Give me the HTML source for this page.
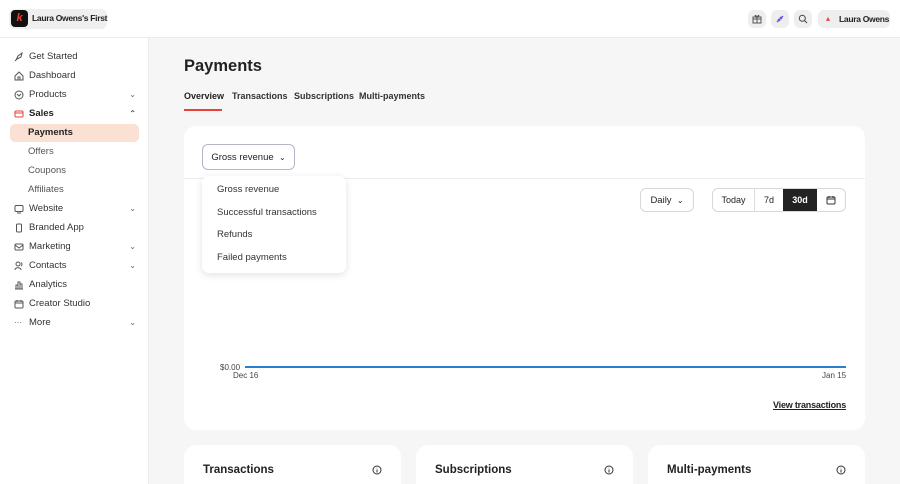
<!DOCTYPE html>
<html style="width:900px;height:484px;overflow:hidden"><head><meta charset="utf-8"><style>
*{box-sizing:border-box;margin:0;padding:0}
body{width:900px;height:484px;overflow:hidden;background:#f6f6f6;font-family:"Liberation Sans",sans-serif;color:#222;position:relative;font-size:10px}
.abs{position:absolute}
.top{left:0;top:0;width:900px;height:38px;background:#fff;border-bottom:1px solid #ececec}
.side{left:0;top:38px;width:149px;height:446px;background:#fff;border-right:1px solid #ececec}
.nav{position:absolute;left:14px;height:19px;line-height:19px;font-size:9.5px;color:#333;display:flex;align-items:center;width:124px}
.nav svg{width:10px;height:10px;margin-right:5px;flex:none}
.nav .ch{position:absolute;right:2px;font-size:8px;color:#666}
.sub{position:absolute;left:28px;font-size:9.5px;color:#555;line-height:19px}
.card{background:#fff;border-radius:12px}
.btn{border:1px solid #d8d8d8;border-radius:6px;background:#fff;display:flex;align-items:center;justify-content:center;font-size:9.5px}
.ib{width:18px;height:18px;border-radius:6px;background:#eee;display:flex;align-items:center;justify-content:center}
.tab{position:absolute;top:91px;font-size:9px;font-weight:bold;color:#333}
</style></head><body>
<div class="abs top"></div>
<div class="abs" style="left:9px;top:9px;width:98px;height:20px;background:#efefef;border-radius:6px"></div>
<div class="abs" style="left:11px;top:10px;width:17px;height:17px;background:#111;border-radius:4px;color:#e8423a;font-weight:bold;font-size:11px;text-align:center;line-height:17px;font-style:italic">k</div>
<div class="abs" style="left:32px;top:13px;font-size:8.5px;font-weight:bold;letter-spacing:-.3px">Laura Owens's First</div>
<div class="abs ib" style="left:748px;top:10px"><svg width="10" height="10" viewBox="0 0 10 10" fill="none" stroke="#555" stroke-width="1"><rect x="1" y="3" width="8" height="6"/><path d="M5 3v6M1 5h8M5 3C3 0 2 2 5 3C8 2 7 0 5 3"/></svg></div>
<div class="abs ib" style="left:771px;top:10px"><svg width="10" height="10" viewBox="0 0 10 10" stroke="#6b4de6" stroke-width="1.4"><path d="M2 8L8 2M3 5l2 2M5 3l2 2"/></svg></div>
<div class="abs ib" style="left:794px;top:10px"><svg width="10" height="10" viewBox="0 0 10 10" fill="none" stroke="#444" stroke-width="1"><circle cx="4.3" cy="4.3" r="3"/><path d="M6.5 6.5L9 9"/></svg></div>
<div class="abs" style="left:818px;top:10px;width:72px;height:18px;background:#eee;border-radius:6px"></div>
<div class="abs" style="left:824px;top:14px;width:8px;height:10px;color:#e8423a;font-size:8px;text-align:center">▴</div>
<div class="abs" style="left:839px;top:14px;font-size:8.5px;font-weight:bold;letter-spacing:-.3px">Laura Owens</div>

<div class="abs side"></div>
<div class="nav" style="top:47px"><svg viewBox="0 0 10 10" fill="none" stroke="#555"><path d="M2 8l2-4 4-3-1 4-4 2zM1 9l2-2"/></svg>Get Started</div>
<div class="nav" style="top:66px"><svg viewBox="0 0 10 10" fill="none" stroke="#555"><path d="M1 5l4-4 4 4v4H1z"/><rect x="4" y="6" width="2" height="3"/></svg>Dashboard</div>
<div class="nav" style="top:85px"><svg viewBox="0 0 10 10" fill="none" stroke="#555"><circle cx="5" cy="5" r="4"/><path d="M3 4l2 2 2-2"/></svg>Products<span class="ch">⌄</span></div>
<div class="nav" style="top:104px;font-weight:bold;color:#222"><svg viewBox="0 0 10 10" fill="none" stroke="#e8423a"><rect x="1" y="2" width="8" height="6" rx="1"/><path d="M1 4h8"/></svg>Sales<span class="ch">⌃</span></div>
<div class="abs" style="left:10px;top:124px;width:129px;height:18px;background:#fbe1d3;border-radius:5px"></div>
<div class="sub" style="top:123px;color:#222;font-weight:bold">Payments</div>
<div class="sub" style="top:142px">Offers</div>
<div class="sub" style="top:161px">Coupons</div>
<div class="sub" style="top:180px">Affiliates</div>
<div class="nav" style="top:199px"><svg viewBox="0 0 10 10" fill="none" stroke="#555"><rect x="1" y="1.5" width="8" height="6" rx="1"/><path d="M3 9h4"/></svg>Website<span class="ch">⌄</span></div>
<div class="nav" style="top:218px"><svg viewBox="0 0 10 10" fill="none" stroke="#555"><rect x="2.5" y="1" width="5" height="8" rx="1"/></svg>Branded App</div>
<div class="nav" style="top:237px"><svg viewBox="0 0 10 10" fill="none" stroke="#555"><rect x="1" y="2" width="8" height="6" rx="1"/><path d="M1 3l4 3 4-3"/></svg>Marketing<span class="ch">⌄</span></div>
<div class="nav" style="top:256px"><svg viewBox="0 0 10 10" fill="none" stroke="#555"><circle cx="4" cy="3" r="2"/><path d="M1 9c0-3 6-3 6 0M7 1.5a2 2 0 010 3.5"/></svg>Contacts<span class="ch">⌄</span></div>
<div class="nav" style="top:275px"><svg viewBox="0 0 10 10" fill="none" stroke="#555"><path d="M1 9h8M2 9V5h2v4M4 9V2h2v7M6 9V4h2v5"/></svg>Analytics</div>
<div class="nav" style="top:294px"><svg viewBox="0 0 10 10" fill="none" stroke="#555"><rect x="1" y="2" width="8" height="7" rx="1"/><path d="M1 4h8M3 1v2M7 1v2"/></svg>Creator Studio</div>
<div class="nav" style="top:313px"><span style="width:10px;margin-right:5px;font-size:8px;color:#555">···</span>More<span class="ch">⌄</span></div>

<div class="abs" style="left:184px;top:57px;font-size:16.5px;font-weight:bold">Payments</div>
<div class="tab" style="left:184px;color:#222">Overview</div>
<div class="abs" style="left:184px;top:109px;width:38px;height:2px;background:#e8423a"></div>
<div class="tab" style="left:232px">Transactions</div>
<div class="tab" style="left:294px">Subscriptions</div>
<div class="tab" style="left:359px">Multi-payments</div>

<div class="abs card" style="left:184px;top:126px;width:681px;height:304px"></div>
<div class="abs" style="left:184px;top:178px;width:681px;height:1px;background:#ececec"></div>
<div class="abs btn" style="left:202px;top:144px;width:93px;height:26px;border-color:#b8b4c8">Gross revenue&nbsp;&nbsp;<span style="font-size:8px">⌄</span></div>
<div class="abs" style="left:202px;top:176px;width:144px;height:97px;background:#fff;border-radius:7px;box-shadow:0 2px 8px rgba(0,0,0,.12)"></div>
<div class="abs" style="left:217px;top:184px;font-size:9.5px;color:#333">Gross revenue</div>
<div class="abs" style="left:217px;top:207px;font-size:9.5px;color:#333">Successful transactions</div>
<div class="abs" style="left:217px;top:229px;font-size:9.5px;color:#333">Refunds</div>
<div class="abs" style="left:217px;top:252px;font-size:9.5px;color:#333">Failed payments</div>
<div class="abs btn" style="left:640px;top:188px;width:54px;height:24px">Daily&nbsp;&nbsp;<span style="font-size:8px">⌄</span></div>
<div class="abs" style="left:712px;top:188px;width:134px;height:24px;border:1px solid #d8d8d8;border-radius:6px;overflow:hidden;display:flex;font-size:9px">
<div style="width:42px;border-right:1px solid #ddd;text-align:center;line-height:22px">Today</div>
<div style="width:28px;text-align:center;line-height:22px">7d</div>
<div style="width:34px;background:#222;color:#fff;text-align:center;line-height:22px;font-weight:bold">30d</div>
<div style="flex:1;display:flex;align-items:center;justify-content:center"><svg width="10" height="10" viewBox="0 0 10 10" fill="none" stroke="#333"><rect x="1" y="2" width="8" height="7" rx="1"/><path d="M1 4h8M3 1v2M7 1v2"/></svg></div></div>
<div class="abs" style="left:220px;top:363px;font-size:8px;color:#444">$0.00</div>
<div class="abs" style="left:245px;top:366px;width:601px;height:2px;background:#2a7fd0"></div>
<div class="abs" style="left:233px;top:371px;font-size:8px;color:#444">Dec 16</div>
<div class="abs" style="left:822px;top:371px;font-size:8px;color:#444">Jan 15</div>
<div class="abs" style="right:54px;top:400px;font-size:9px;font-weight:bold;text-decoration:underline;letter-spacing:-.2px">View transactions</div>

<div class="abs card" style="left:184px;top:445px;width:217px;height:39px;border-radius:12px 12px 0 0"></div>
<div class="abs card" style="left:416px;top:445px;width:217px;height:39px;border-radius:12px 12px 0 0"></div>
<div class="abs card" style="left:648px;top:445px;width:217px;height:39px;border-radius:12px 12px 0 0"></div>
<div class="abs" style="left:203px;top:464px;font-size:11.5px;font-weight:bold">Transactions</div>
<div class="abs" style="left:435px;top:464px;font-size:11.5px;font-weight:bold">Subscriptions</div>
<div class="abs" style="left:667px;top:464px;font-size:11.5px;font-weight:bold">Multi-payments</div>
<svg class="abs" style="left:372px;top:465px" width="10" height="10" viewBox="0 0 10 10" fill="none" stroke="#333"><circle cx="5" cy="5" r="4"/><path d="M5 4.5v3M5 2.7v.6"/></svg>
<svg class="abs" style="left:604px;top:465px" width="10" height="10" viewBox="0 0 10 10" fill="none" stroke="#333"><circle cx="5" cy="5" r="4"/><path d="M5 4.5v3M5 2.7v.6"/></svg>
<svg class="abs" style="left:836px;top:465px" width="10" height="10" viewBox="0 0 10 10" fill="none" stroke="#333"><circle cx="5" cy="5" r="4"/><path d="M5 4.5v3M5 2.7v.6"/></svg>
</body></html>
